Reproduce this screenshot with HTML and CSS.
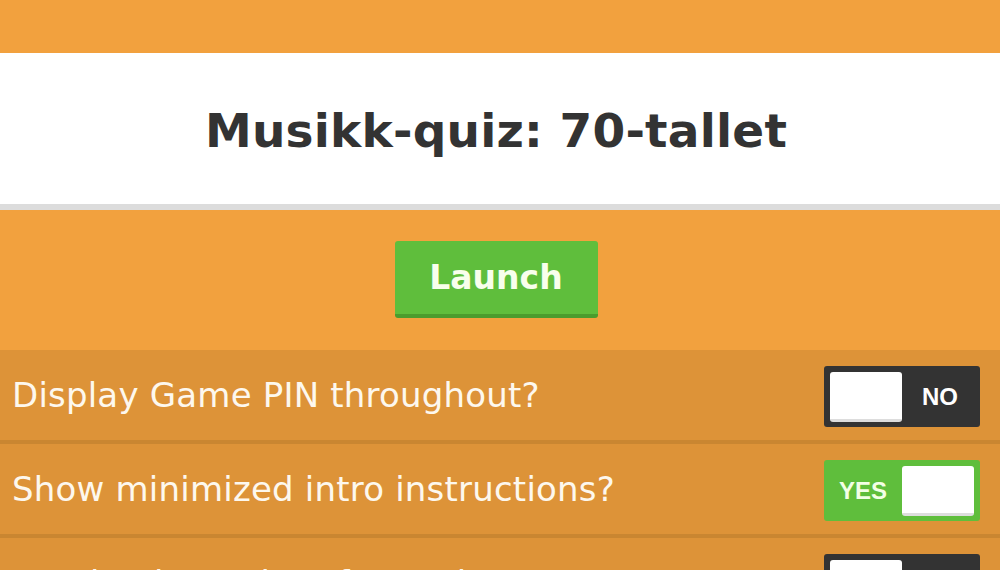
FILE: index.html
```html
<!DOCTYPE html>
<html>
<head>
<meta charset="utf-8">
<link rel="stylesheet" href="styles.css">
</head>
<body>
<div class="topband"></div>
<header class="titlebar">
  <h1 class="title">Musikk-quiz: 70-tallet</h1>
</header>
<div class="launch-wrap">
  <button class="launch">Launch</button>
</div>
<ul class="options">
  <li class="option">
    <span class="label">Display Game PIN throughout?</span>
    <span class="toggle off"><span class="knob"></span><span class="state">NO</span></span>
  </li>
  <li class="option">
    <span class="label">Show minimized intro instructions?</span>
    <span class="toggle on"><span class="state">YES</span><span class="knob"></span></span>
  </li>
  <li class="option">
    <span class="label">Randomize order of questions?</span>
    <span class="toggle off"><span class="knob"></span><span class="state">NO</span></span>
  </li>
</ul>
</body>
</html>
```
FILE: styles.css
```css
html, body {
  margin: 0;
  padding: 0;
  background: #f2a13e;
  font-family: "DejaVu Sans", "Open Sans", sans-serif;
  overflow: hidden;
}
.topband {
  height: 53px;
}
.titlebar {
  background: #ffffff;
  height: 151px;
  border-bottom: 6px solid #dcdcdc;
  display: flex;
  align-items: center;
  justify-content: center;
  padding-right: 8px;
}
.title {
  margin: 0;
  font-size: 47px;
  font-weight: bold;
  color: #333333;
  letter-spacing: 0.2px;
  padding-top: 4px;
}
.launch-wrap {
  display: flex;
  justify-content: center;
  padding: 31px 8px 32px 0;
}
.launch {
  width: 203px;
  height: 77px;
  border: none;
  border-bottom: 4px solid #4b9c2d;
  border-radius: 3px;
  background: #5fbe3c;
  color: #f8ffec;
  font-family: "DejaVu Sans", "Open Sans", sans-serif;
  font-weight: bold;
  font-size: 33px;
  padding: 0;
}
.options {
  list-style: none;
  margin: 0;
  padding: 0;
}
.option {
  height: 90px;
  background: #dd9338;
  border-bottom: 4px solid #c98631;
  display: flex;
  align-items: center;
  justify-content: space-between;
  padding: 0 20px 0 12px;
}
.label {
  color: #fdf8ee;
  font-size: 34px;
  font-weight: 500;
  letter-spacing: 0.2px;
}
.toggle {
  width: 156px;
  height: 61px;
  box-sizing: border-box;
  padding: 6px;
  border-radius: 3px;
  display: flex;
  align-items: center;
  margin-top: 3px;
}
.toggle.off { background: #333333; }
.toggle.on { background: #5fbe3c; }
.knob {
  width: 72px;
  height: 50px;
  box-sizing: border-box;
  background: #ffffff;
  border-bottom: 3px solid #dddddd;
  border-radius: 3px;
}
.state {
  flex: 1;
  text-align: center;
  font-family: "Liberation Sans", Arial, sans-serif;
  font-weight: bold;
  font-size: 24px;
  color: #ffffff;
}
.toggle.off .state { padding-left: 4px; }
.toggle.on .state { color: #f3ffe6; padding-right: 6px; }
```
